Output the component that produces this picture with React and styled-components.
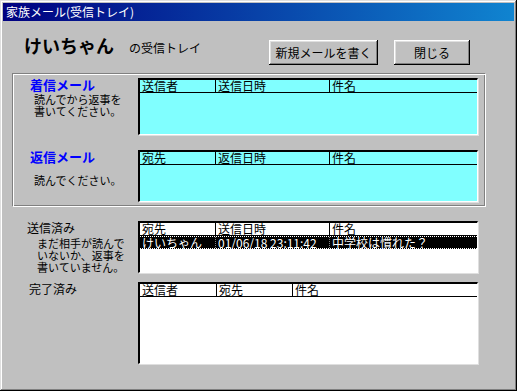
import styled, { createGlobalStyle } from "styled-components";

const GlobalStyle = createGlobalStyle`
    html, body {
        margin: 0;
        padding: 0;
        background: #c0c0c0;
    }
    * {
        box-sizing: border-box;
    }
`;

const font = `"MS PGothic", "Noto Sans CJK JP", "Liberation Sans", sans-serif`;

const columnsFor = {
    inbox: [76, 114],
    done: [77, 76],
};

const ListView = ({ height, bg, headers, widths, rows = [] }) => {
    return (
        <List $height={height} $bg={bg}>
            <HeadRow>
                {headers.map((h, i) => (
                    <HeadCell key={h} style={i < widths.length ? { width: widths[i] } : undefined} $last={i === headers.length - 1}>
                        {h}
                    </HeadCell>
                ))}
            </HeadRow>
            {rows.map((r, ri) => (
                <SelRow key={ri}>
                    {r.map((c, i) => (
                        <SelCell key={i} style={i < widths.length ? { width: widths[i] } : undefined} $last={i === r.length - 1}>
                            {c}
                        </SelCell>
                    ))}
                </SelRow>
            ))}
        </List>
    );
};

const App = () => {
    return (
        <>
            <GlobalStyle />
            <Window>
                <TitleBar>家族メール(受信トレイ)</TitleBar>
                <Body>
                    <Header>
                        <Owner>
                            けいちゃん<Sub>の受信トレイ</Sub>
                        </Owner>
                        <Buttons>
                            <Button $width={109}>新規メールを書く</Button>
                            <Button $width={76}>閉じる</Button>
                        </Buttons>
                    </Header>

                    <Frame>
                        <Section>
                            <Label $width={124}>
                                <Heading>着信メール</Heading>
                                <Note $indent={20}>読んでから返事を<br />書いてください。</Note>
                            </Label>
                            <ListView height={57} bg="#80ffff" headers={["送信者", "送信日時", "件名"]} widths={columnsFor.inbox} />
                        </Section>
                        <Section $gap={15}>
                            <Label $width={124}>
                                <Heading>返信メール</Heading>
                                <Note $indent={20} $top={10}>読んでください。</Note>
                            </Label>
                            <ListView height={52} bg="#80ffff" headers={["宛先", "返信日時", "件名"]} widths={columnsFor.inbox} />
                        </Section>
                    </Frame>

                    <Section $gap={14} $outside>
                        <Label $width={126}>
                            <Plain $indent={15}>送信済み</Plain>
                            <Note $indent={25} $top={2}>まだ相手が読んで<br />いないか、返事を<br />書いていません。</Note>
                        </Label>
                        <ListView
                            height={52}
                            bg="#ffffff"
                            headers={["宛先", "送信日時", "件名"]}
                            widths={columnsFor.inbox}
                            rows={[["けいちゃん", "01/06/18 23:11:42", "中学校は慣れた？"]]}
                        />
                    </Section>
                    <Section $gap={9} $outside>
                        <Label $width={126}>
                            <Plain $indent={17}>完了済み</Plain>
                        </Label>
                        <ListView height={82} bg="#ffffff" headers={["送信者", "宛先", "件名"]} widths={columnsFor.done} />
                    </Section>
                </Body>
            </Window>
        </>
    );
};

const Window = styled.div`
    width: 517px;
    height: 391px;
    background: #c0c0c0;
    padding: 3px;
    display: flex;
    flex-direction: column;
    font-family: ${font};
    font-size: 12px;
    color: #000;
    box-shadow: inset -1px -1px #000, inset 1px 1px #dfdfdf, inset -2px -2px #808080, inset 2px 2px #fff;
`;

const TitleBar = styled.div`
    height: 18px;
    background: linear-gradient(to right, #000080, #1084d0);
    color: #fff;
    font-size: 12px;
    line-height: 18px;
    padding-left: 3px;
    white-space: nowrap;
`;

const Body = styled.div`
    flex: 1;
    padding: 19px 28px 0 9px;
    display: flex;
    flex-direction: column;
`;

const Header = styled.div`
    display: flex;
    justify-content: space-between;
    align-items: flex-start;
    height: 25px;
    margin-bottom: 8px;
`;

const Owner = styled.div`
    padding-left: 12px;
    margin-top: -7px;
    font-size: 18px;
    font-weight: bold;
    line-height: 24px;
    white-space: nowrap;
    display: flex;
    align-items: baseline;
`;

const Sub = styled.span`
    font-size: 12px;
    font-weight: normal;
    margin-left: 15px;
`;

const Buttons = styled.div`
    display: flex;
    gap: 16px;
    margin-right: 16px;
`;

const Button = styled.button`
    width: ${(p) => p.$width}px;
    height: 25px;
    background: #c0c0c0;
    border: none;
    padding: 0;
    font-family: ${font};
    font-size: 12px;
    color: #000;
    box-shadow: inset -1px -1px #000, inset 1px 1px #fff, inset -2px -2px #808080, inset 2px 2px #dfdfdf;
`;

const Frame = styled.div`
    border: 1px solid;
    border-color: #808080 #fff #fff #808080;
    box-shadow: inset 1px 1px #fff, inset -1px -1px #808080;
    padding: 4px 7px 4px 1px;
`;

const Section = styled.div`
    display: flex;
    margin-top: ${(p) => p.$gap || 0}px;
    margin-right: ${(p) => (p.$outside ? 8 : 0)}px;
`;

const Label = styled.div`
    width: ${(p) => p.$width}px;
    flex-shrink: 0;
`;

const Heading = styled.div`
    color: #0000ff;
    font-weight: bold;
    font-size: 13px;
    line-height: 14px;
    padding-left: 16px;
`;

const Plain = styled.div`
    line-height: 14px;
    padding-left: ${(p) => p.$indent}px;
`;

const Note = styled.div`
    padding-left: ${(p) => p.$indent}px;
    margin-top: ${(p) => p.$top || 1}px;
    font-size: 11px;
    line-height: 12px;
    white-space: nowrap;
`;

const List = styled.div`
    flex: 1;
    height: ${(p) => p.$height}px;
    background: ${(p) => p.$bg};
    border-top: 2px solid #000;
    border-left: 2px solid #000;
    border-right: 1px solid #fff;
    border-bottom: 1px solid #fff;
    box-shadow: 1px 1px #dfdfdf;
    overflow: hidden;
`;

const HeadRow = styled.div`
    display: flex;
    height: 13px;
    border-bottom: 1px solid #000;
`;

const HeadCell = styled.div`
    ${(p) => (p.$last ? "flex: 1;" : "border-right: 1px solid #000;")}
    padding-left: 2px;
    font-size: 12px;
    line-height: 12px;
    white-space: nowrap;
`;

const SelRow = styled.div`
    display: flex;
    height: 13px;
    background: #000;
    color: #fff;
    border-top: 1px dotted #fff;
    border-bottom: 1px dotted #fff;
`;

const SelCell = styled.div`
    ${(p) => (p.$last ? "flex: 1;" : "border-right: 1px dotted #808080;")}
    padding-left: 2px;
    font-size: 12px;
    line-height: 11px;
    white-space: nowrap;
`;

export default App;
